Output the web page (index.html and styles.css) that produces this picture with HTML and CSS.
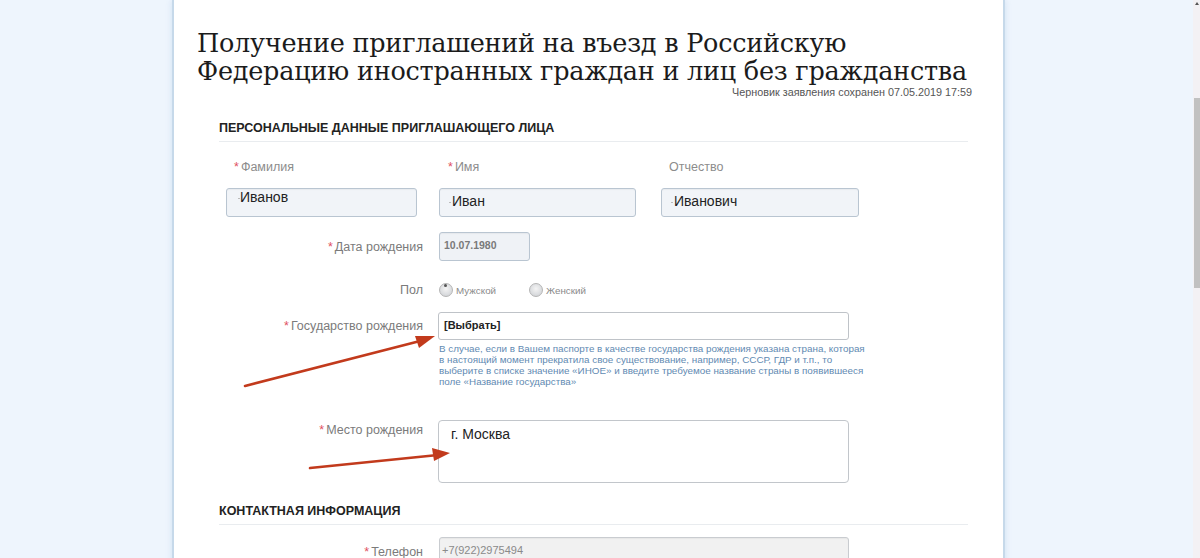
FILE: index.html
```html
<!DOCTYPE html>
<html lang="ru">
<head>
<meta charset="utf-8">
<title>Получение приглашений</title>
<link rel="stylesheet" href="styles.css">
</head>
<body>
<div class="page">
  <div class="main">
    <div class="panel">
      <h1 class="title">Получение приглашений на въезд в Российскую<br>Федерацию иностранных граждан и лиц без гражданства</h1>
      <div class="draft">Черновик заявления сохранен 07.05.2019 17:59</div>

      <div class="form">
        <div class="section-title">ПЕРСОНАЛЬНЫЕ ДАННЫЕ ПРИГЛАШАЮЩЕГО ЛИЦА</div>

        <div class="names">
          <div class="name-col c1">
            <div class="top-label"><span class="req">*</span>Фамилия</div>
            <div class="input filled up"><span class="tick"></span>Иванов</div>
          </div>
          <div class="name-col c2">
            <div class="top-label"><span class="req">*</span>Имя</div>
            <div class="input filled"><span class="tick"></span>Иван</div>
          </div>
          <div class="name-col c3">
            <div class="top-label plain">Отчество</div>
            <div class="input filled"><span class="tick"></span>Иванович</div>
          </div>
        </div>

        <div class="row row-date">
          <div class="label"><span class="req">*</span>Дата рождения</div>
          <div class="field"><div class="input small date">10.07.1980</div></div>
        </div>

        <div class="row row-sex">
          <div class="label">Пол</div>
          <div class="field radios">
            <span class="radio"><span class="dot dark"></span>Мужской</span>
            <span class="radio"><span class="dot"></span>Женский</span>
          </div>
        </div>

        <div class="row row-country">
          <div class="label lh28"><span class="req">*</span>Государство рождения</div>
          <div class="field">
            <div class="select">[Выбрать]</div>
            <div class="help">В случае, если в Вашем паспорте в качестве государства рождения указана страна, которая<br>в настоящий момент прекратила свое существование, например, СССР, ГДР и т.п., то<br>выберите в списке значение «ИНОЕ» и введите требуемое название страны в появившееся<br>поле «Название государства»</div>
          </div>
        </div>

        <div class="row row-place">
          <div class="label top"><span class="req">*</span>Место рождения</div>
          <div class="field"><div class="textarea">г. Москва</div></div>
        </div>

        <div class="section-title s2">КОНТАКТНАЯ ИНФОРМАЦИЯ</div>

        <div class="row row-phone">
          <div class="label"><span class="req">*</span>Телефон</div>
          <div class="field"><div class="input small phone">+7(922)2975494</div></div>
        </div>
      </div>
    </div>
  </div>
  <div class="scrollbar"><div class="arrow-up"></div><div class="thumb"></div></div>

  <svg class="arrows" width="1200" height="558" viewBox="0 0 1200 558">
    <g stroke="#c23a1c" stroke-width="2.6" stroke-linecap="round" fill="none">
      <line x1="245" y1="386" x2="424" y2="340"/>
      <line x1="310" y1="468" x2="438" y2="455"/>
    </g>
    <g fill="#c23a1c">
      <polygon points="435,336 419,348 415,336"/>
      <polygon points="450,453 434,461 432,448"/>
    </g>
  </svg>
</div>
</body>
</html>
```

FILE: styles.css
```css
html, body {
  margin: 0;
  padding: 0;
}
body {
  background: #eef5fd;
  font-family: "Liberation Sans", Arial, sans-serif;
  overflow: hidden;
}
.page {
  position: relative;
  width: 1200px;
  height: 558px;
  display: flex;
  overflow: hidden;
}
.main {
  flex: 1;
  height: 558px;
  padding-left: 172px;
  box-sizing: border-box;
}
.panel {
  width: 806px;
  height: 600px;
  background: #fff;
  border-left: 2px solid #c6d9ea;
  border-right: 2px solid #c6d9ea;
  box-shadow: 0 0 6px rgba(170, 200, 230, 0.45);
  padding: 29px 0 0 23px;
}
.title {
  margin: 0;
  font-family: "DejaVu Serif", Georgia, serif;
  font-weight: normal;
  font-size: 25.5px;
  line-height: 28px;
  color: #1b1b1b;
  letter-spacing: -0.24px;
  white-space: nowrap;
}
.draft {
  width: 775px;
  text-align: right;
  font-size: 10.8px;
  line-height: 12px;
  height: 12px;
  margin-top: 1px;
  color: #555;
}
.form {
  padding-left: 22px;
  width: 749px;
}
.section-title {
  margin-top: 22px;
  font-size: 12.5px;
  font-weight: bold;
  line-height: 16px;
  color: #222;
  padding-bottom: 5px;
  border-bottom: 1px solid #e9ecef;
}
.section-title.s2 {
  margin-top: 20px;
}
.req {
  color: #e0505e;
  margin-right: 2px;
}
.names {
  display: flex;
  margin-top: 17px;
}
.name-col.c1 { margin-left: 7px; width: 191px; }
.name-col.c2 { margin-left: 22px; width: 197px; }
.name-col.c3 { margin-left: 25px; width: 198px; }
.top-label {
  font-size: 12.5px;
  line-height: 16px;
  color: #8c8c8c;
  padding-left: 8px;
  margin-bottom: 13px;
}
.name-col.c2 .top-label { padding-left: 9px; }
.top-label.plain { padding-left: 8px; }
.input {
  height: 29px;
  box-sizing: border-box;
  border: 1px solid #b9c5d1;
  border-radius: 3px;
  background: #f1f4f8;
  box-shadow: inset 0 1px 1px rgba(0,0,0,0.04);
}
.input.filled {
  font-size: 14px;
  color: #222;
  line-height: 24px;
  padding: 0 0 0 9px;
  position: relative;
}
.input.filled.up { line-height: 16px; padding-left: 11px; }
.tick {
  display: inline-block;
  width: 2px;
  height: 1px;
  background: #bbb;
  vertical-align: middle;
  margin-right: 1px;
}
.input.filled.up .tick { margin-right: 0; }
.row {
  display: flex;
}
.label {
  width: 204px;
  text-align: right;
  font-size: 12.5px;
  color: #7b7b7b;
  flex: none;
}
.field {
  margin-left: 16px;
}
.row-date { margin-top: 15px; align-items: center; }
.input.small {
  font-size: 10.5px;
  font-weight: bold;
  color: #7a7a7a;
  line-height: 25px;
  padding-left: 4px;
  background: #eff2f6;
}
.input.date { width: 91px; }
.row-sex { margin-top: 19px; align-items: center; height: 20px; }
.radios {
  display: flex;
  align-items: center;
  font-size: 9.8px;
  color: #8a8a8a;
}
.radio {
  display: inline-flex;
  align-items: center;
  margin-right: 33px;
}
.dot {
  display: inline-block;
  width: 14px;
  height: 14px;
  border-radius: 50%;
  border: 1px solid #b5b5b5;
  background: radial-gradient(circle at 50% 40%, #f4f4f4 0%, #d7d9dc 70%, #c6c8cb 100%);
  margin-right: 3px;
  box-sizing: border-box;
  position: relative;
}
.dot.dark::after {
  content: "";
  position: absolute;
  left: 4px;
  top: 0;
  width: 3px;
  height: 3px;
  border-radius: 50%;
  background: #555;
}
.row-country { margin-top: 12px; }
.label.lh28 { line-height: 28px; }
.select {
  width: 411px;
  height: 28px;
  box-sizing: border-box;
  border: 1px solid #bfc3c8;
  border-radius: 3px;
  background: #fff;
  font-size: 11px;
  font-weight: bold;
  color: #222;
  line-height: 24px;
  padding-left: 5px;
  margin-left: -1px;
}
.help {
  margin-top: 3px;
  font-size: 9.85px;
  line-height: 11px;
  color: #5f8ab2;
  white-space: nowrap;
}
.row-place { margin-top: 33px; }
.label.top { padding-top: 2px; line-height: 16px; }
.textarea {
  width: 411px;
  height: 63px;
  box-sizing: border-box;
  border: 1px solid #c2c6cb;
  border-radius: 4px;
  background: #fff;
  font-size: 14px;
  color: #222;
  padding: 5px 0 0 12px;
  line-height: 16px;
  margin-left: -1px;
}
.row-phone { margin-top: 12px; align-items: center; }
.input.phone {
  width: 410px;
  font-weight: normal;
  font-size: 11px;
  color: #8a8a8a;
  background: #f1f1f1;
  border-color: #c9ccd0;
  padding-left: 2px;
}
.scrollbar {
  width: 7px;
  height: 558px;
  background: #f3f1f4;
  position: relative;
  flex: none;
}
.arrow-up {
  position: absolute;
  left: 2px;
  top: 2px;
  width: 0;
  height: 0;
  border-left: 2px solid transparent;
  border-right: 2px solid transparent;
  border-bottom: 3px solid #555;
}
.thumb {
  position: absolute;
  left: 1px;
  top: 98px;
  width: 6px;
  height: 190px;
  background: #c1c1c1;
}
.arrows {
  position: absolute;
  left: 0;
  top: 0;
  pointer-events: none;
}
```
